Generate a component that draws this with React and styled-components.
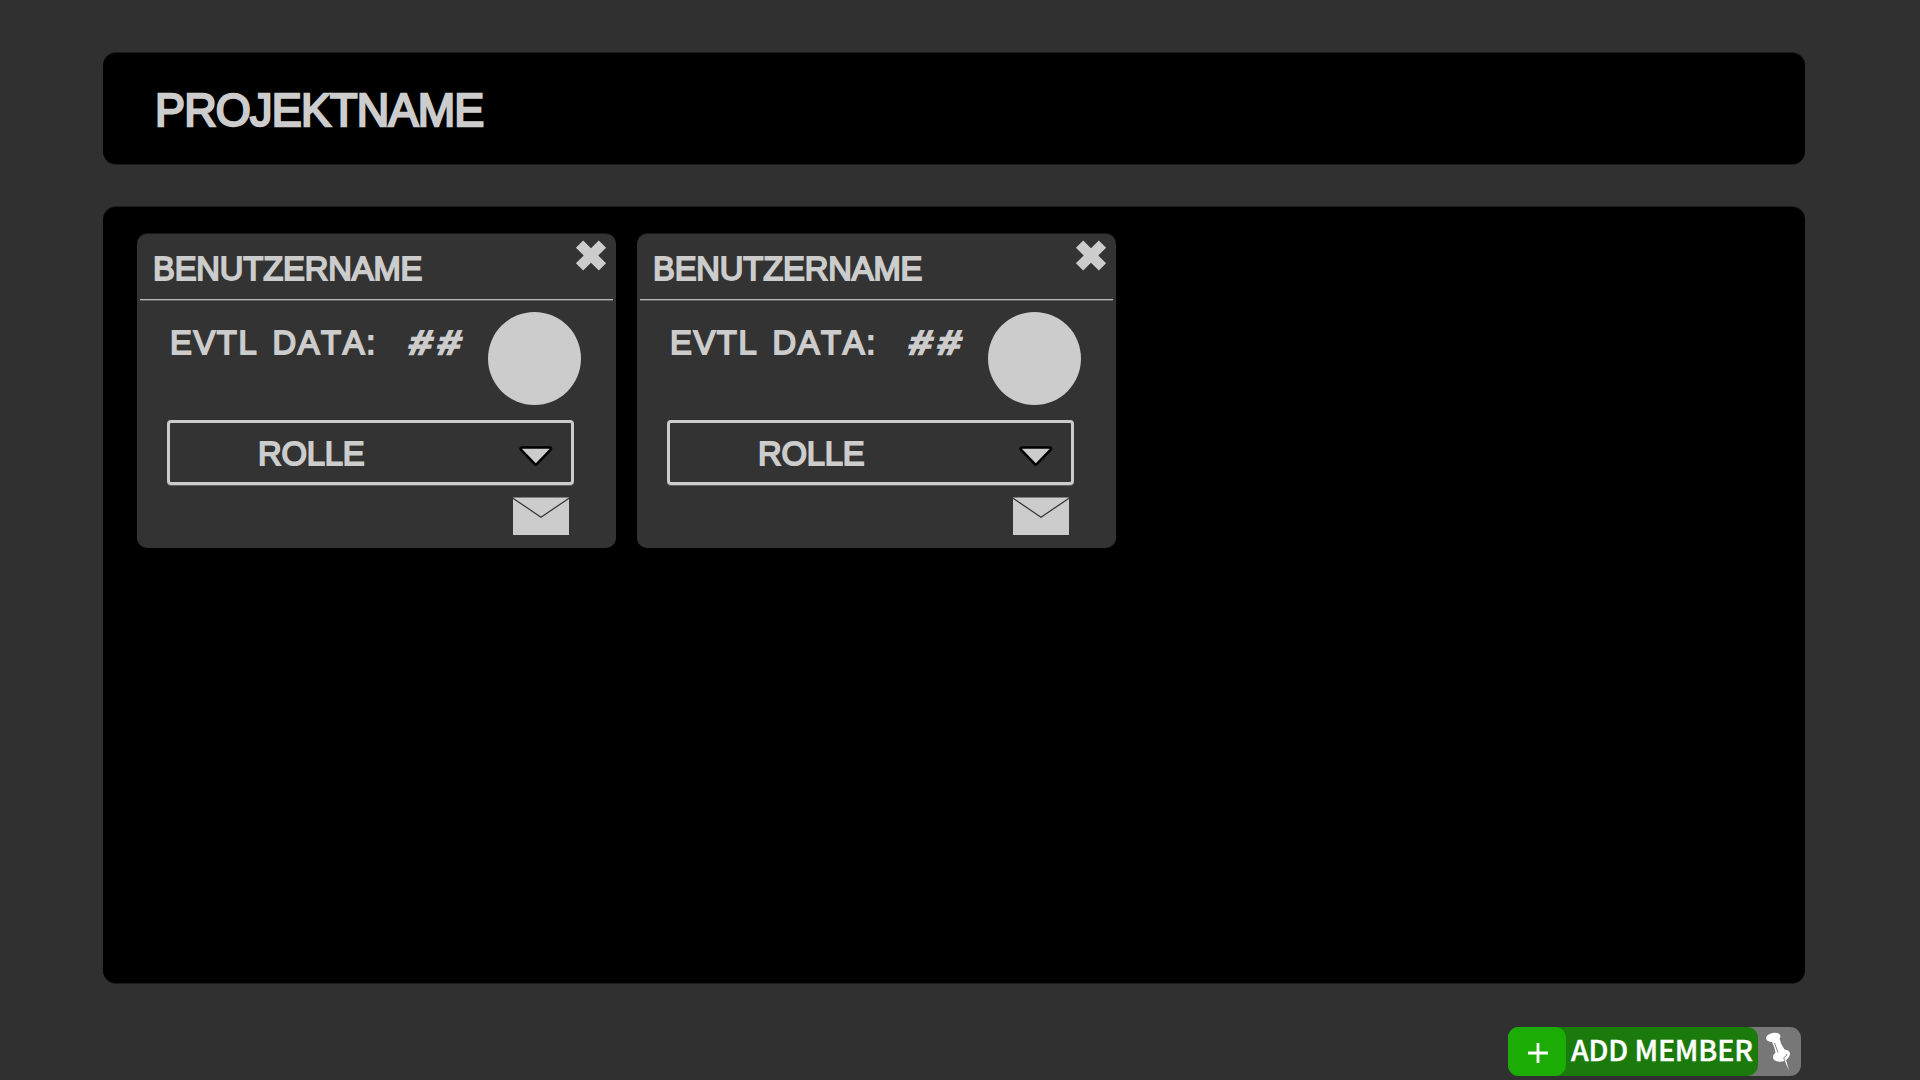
import React from "react";
import styled, { createGlobalStyle } from "styled-components";

const GlobalStyle = createGlobalStyle`
  * { box-sizing: border-box; }
  html, body { margin: 0; background: #303030; }
`;

const Page = styled.div`
  width: 1920px;
  height: 1080px;
  padding: 53px 115px 0 103px;
  display: flex;
  flex-direction: column;
  overflow: hidden;
  background: #303030;
  color: #cccccc;
  font-family: "Liberation Sans", Arial, sans-serif;
`;

const Header = styled.header`
  flex: none;
  height: 111px;
  padding: 5px 0 0 52px;
  display: flex;
  align-items: center;
  background: #000;
  border-radius: 13px;
  box-shadow: 0 -1px 0 #1c1c1c, 0 1px 0 #1c1c1c;
`;

const Label = styled.span`
  display: block;
  font-size: ${(p) => p.$size}px;
  line-height: ${(p) => p.$line || 35}px;
  letter-spacing: ${(p) => p.$spacing}px;
  word-spacing: ${(p) => p.$word || 0}px;
  font-kerning: none;
  -webkit-text-stroke: ${(p) => p.$stroke || 1.8}px currentColor;
  white-space: pre;
  transform: ${(p) => p.$shape || "scaleX(0.992)"};
  transform-origin: 0 85%;
`;

const Board = styled.main`
  flex: none;
  height: 776px;
  margin-top: 43px;
  padding: 27px 34px;
  display: flex;
  align-items: flex-start;
  gap: 21px;
  background: #000;
  border-radius: 13px;
  box-shadow: 0 -1px 0 #1c1c1c, 0 1px 0 #1c1c1c;
`;

const Card = styled.article`
  width: 479px;
  height: 314px;
  display: flex;
  flex-direction: column;
  background: #333333;
  border-radius: 10px;
  box-shadow: 0 -1px 0 #181818;
`;

const CardHead = styled.div`
  height: 66px;
  margin: 0 3px;
  padding: 6px 6px 0 12.7px;
  display: flex;
  justify-content: space-between;
  align-items: flex-start;
  border-bottom: 1px solid #b8b8b8;
  box-shadow: 0 1px 0 #626262;
`;

const HeadText = styled.div`
  padding-top: 11px;
`;

const CardInfo = styled.div`
  height: 120px;
  padding: 12px 35px 0 32.7px;
  display: flex;
  align-items: flex-start;
`;

const DataText = styled.div`
  width: 238.3px;
  padding-top: 13px;
`;

const HashText = styled.div`
  flex: 1;
  padding-top: 13px;
`;

const Avatar = styled.div`
  width: 93px;
  height: 93px;
  border-radius: 50%;
  background: #cccccc;
`;

const RoleSelect = styled.div`
  flex: none;
  width: 407px;
  height: 65px;
  margin-left: 30px;
  padding: 2px 18px 0 87.5px;
  display: flex;
  align-items: center;
  justify-content: space-between;
  border: 3px solid #cccccc;
  border-radius: 4px;
  box-shadow: 0 1px 0 #626262;
`;

const CardFoot = styled.div`
  padding: 12px 47px 0 0;
  display: flex;
  justify-content: flex-end;
`;

const Footer = styled.footer`
  display: flex;
  justify-content: flex-end;
  padding: 44px 4px 0 0;
`;

const AddBar = styled.div`
  width: 293px;
  height: 49px;
  display: flex;
  background: #777777;
  border-radius: 11px;
`;

const AddButton = styled.div`
  width: 250px;
  display: flex;
  background: #1b7a0c;
  border-radius: 11px;
`;

const Plus = styled.div`
  width: 58px;
  padding: 2px 0 0 1px;
  display: flex;
  align-items: center;
  justify-content: center;
  background: #1bad06;
  border-radius: 11px;
`;

const AddText = styled.span`
  padding-left: 5px;
  color: #fff;
  font-family: "Noto Sans CJK SC", "Noto Sans", sans-serif;
  font-weight: 500;
  font-size: 28.5px;
  line-height: 44px;
  letter-spacing: -0.15px;
  -webkit-text-stroke: 0.4px #fff;
  white-space: nowrap;
`;

const PinSlot = styled.div`
  flex: 1;
  padding: 4px 0 0 7px;
`;

const Svg = styled.svg`
  display: block;
  flex: none;
`;

const ArrowSvg = styled(Svg)`
  margin-top: 5px;
`;

function Cross() {
  return (
    <Svg width="32" height="32" viewBox="0 0 32 32">
      <path d="M8.2 .4 16 8.2 23.8 .4 31.1 7.7 23.3 15.5 31.1 23.3 23.8 30.6 16 22.8 8.2 30.6 .9 23.3 8.7 15.5 .9 7.7Z" fill="#ccc" />
    </Svg>
  );
}

function Arrow() {
  return (
    <ArrowSvg width="34" height="20" viewBox="0 0 34 20">
      <path d="M2.8 2.8H30.8L16.8 17.2Z" fill="#ccc" stroke="#000" strokeWidth="5" strokeLinejoin="round" paintOrder="stroke" />
    </ArrowSvg>
  );
}

function Envelope() {
  return (
    <Svg width="56" height="38" viewBox="0 0 56 38">
      <path d="M0 .6H56V38H0Z" fill="#ccc" />
      <path d="M0 1.2 28 20.2 56 1.2" fill="none" stroke="#333" strokeWidth="1.2" />
    </Svg>
  );
}

function Pin() {
  return (
    <Svg width="28" height="42" viewBox="0 0 28 42">
      <ellipse cx="8.2" cy="6.3" rx="7.3" ry="4.5" transform="rotate(-12 8.2 6.3)" fill="#fff" />
      <path d="M6 9.5 14.5 7.5Q15.500 13 19.5 18.5 25 19 25 23 24.500 27 19.5 30 13 32 9 29 6.500 25 10.500 21.500Q9 14 6 9.500Z" fill="#fff" />
      <path d="M9.500 12 13 21.500M18.500 27Q21.500 25.500 22 23M18.800 27 20 30.500" fill="none" stroke="#777" strokeWidth=".9" />
      <path d="M19.500 29.500 24 39.500 21 29Z" fill="#fff" />
    </Svg>
  );
}

function MemberCard({ name }) {
  return (
    <Card>
      <CardHead>
        <HeadText><Label $size={33} $spacing={-0.15}>{name}</Label></HeadText>
        <Cross />
      </CardHead>
      <CardInfo>
        <DataText><Label $size={33} $spacing={1.6} $word={3.6}>EVTL DATA:</Label></DataText>
        <HashText>
          <Label $size={33} $spacing={6.5} $stroke={2.6} $shape="scaleX(1.16) skewX(-10deg)">##</Label>
        </HashText>
        <Avatar />
      </CardInfo>
      <RoleSelect>
        <Label $size={33} $spacing={-0.2}>ROLLE</Label>
        <Arrow />
      </RoleSelect>
      <CardFoot><Envelope /></CardFoot>
    </Card>
  );
}

export default function App() {
  return (
    <Page>
      <GlobalStyle />
      <Header><Label $size={45.5} $line={48} $spacing={-0.8} $stroke={2.3} $shape="scaleX(0.988)">PROJEKTNAME</Label></Header>
      <Board>
        <MemberCard name="BENUTZERNAME" />
        <MemberCard name="BENUTZERNAME" />
      </Board>
      <Footer>
        <AddBar>
          <AddButton>
            <Plus>
              <Svg width="20" height="20" viewBox="0 0 20 20">
                <path d="M10 0V20M0 10H20" stroke="#fff" strokeWidth="2.8" />
              </Svg>
            </Plus>
            <AddText>ADD MEMBER</AddText>
          </AddButton>
          <PinSlot><Pin /></PinSlot>
        </AddBar>
      </Footer>
    </Page>
  );
}
